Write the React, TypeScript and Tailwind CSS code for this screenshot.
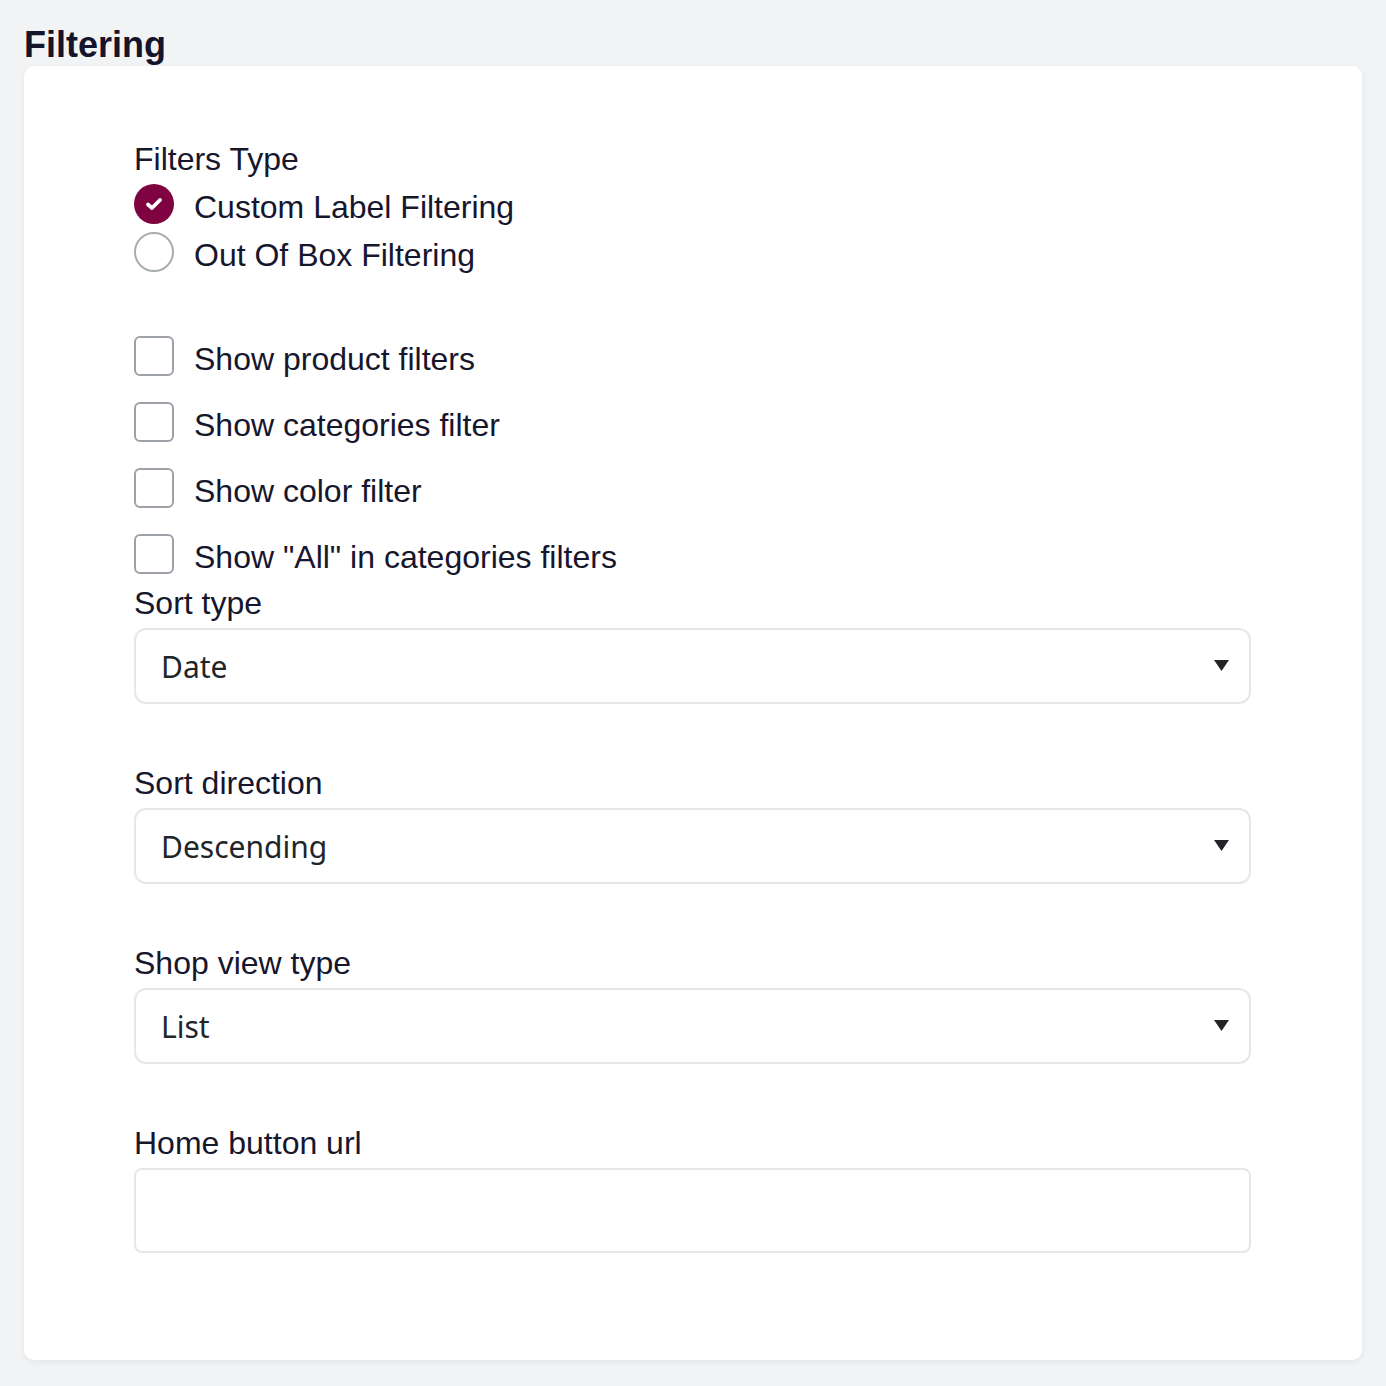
import React from 'react'

const SANS = "font-['Liberation_Sans',Arial,sans-serif]"

interface OptionRowProps {
  label: string
  checked?: boolean
}

function RadioRow({ label, checked }: OptionRowProps) {
  return (
    <label className="flex items-center h-[48px]">
      {checked ? (
        <span className="flex-shrink-0 w-[40px] h-[40px] rounded-full bg-[#7f0341] flex items-center justify-center">
          <svg width="20" height="16" viewBox="0 0 20 16" fill="none">
            <path d="M4 8.5l4 3.5 8-8" stroke="#fff" strokeWidth="3.8" strokeLinecap="round" strokeLinejoin="round" />
          </svg>
        </span>
      ) : (
        <span className="flex-shrink-0 w-[40px] h-[40px] rounded-full border-2 border-[#a7adb1] bg-white" />
      )}
      <span className="ml-[20px] pt-[6px]">{label}</span>
    </label>
  )
}

function CheckboxRow({ label }: OptionRowProps) {
  return (
    <label className="flex items-center h-[48px]">
      <span className="flex-shrink-0 w-[40px] h-[40px] rounded-[6px] border-2 border-[#9ca2a7] bg-white" />
      <span className="ml-[20px] pt-[6px]">{label}</span>
    </label>
  )
}

function SelectField({ label, value }: { label: string; value: string }) {
  return (
    <div className="mb-[54px]">
      <div className="h-[50px] pt-[1px]">{label}</div>
      <div className="relative">
        <div className="h-[76px] rounded-[12px] border-2 border-[#e6e6eb] bg-white pl-[25px] pt-[2px] flex items-center font-['Noto_Sans',sans-serif] text-[30px] text-[#212529]">
          {value}
        </div>
        <svg
          className="absolute right-[22px] top-[32px]"
          width="15"
          height="11"
          viewBox="0 0 15 11"
        >
          <path d="M0 0h15L7.5 11z" fill="#222428" />
        </svg>
      </div>
    </div>
  )
}

export default function App() {
  return (
    <div className={`min-h-screen bg-[#f2f3f5] px-[24px] pt-[23px] pb-[26px] ${SANS} text-[#16162d]`}>
      <h1 className="text-[36px] font-bold leading-[43px] text-[#14142b]">Filtering</h1>

      <div className="bg-white rounded-[10px] shadow-[0_2px_6px_rgba(20,20,50,0.06)] pt-[66px] pb-[107px] pl-[110px] pr-[111px] text-[32px] leading-[48px]">
        {/* Filters type */}
        <div className="h-[48px] pt-[3px]">Filters Type</div>
        <RadioRow label="Custom Label Filtering" checked />
        <RadioRow label="Out Of Box Filtering" />

        {/* Checkboxes */}
        <div className="mt-[56px] flex flex-col gap-[18px]">
          <CheckboxRow label="Show product filters" />
          <CheckboxRow label="Show categories filter" />
          <CheckboxRow label="Show color filter" />
          <CheckboxRow label={'Show "All" in categories filters'} />
        </div>

        <SelectField label="Sort type" value="Date" />
        <SelectField label="Sort direction" value="Descending" />
        <SelectField label="Shop view type" value="List" />

        <div>
          <div className="h-[50px] pt-[1px]">Home button url</div>
          <div className="h-[85px] rounded-[8px] border-2 border-[#e6e6eb] bg-white" />
        </div>
      </div>
    </div>
  )
}
